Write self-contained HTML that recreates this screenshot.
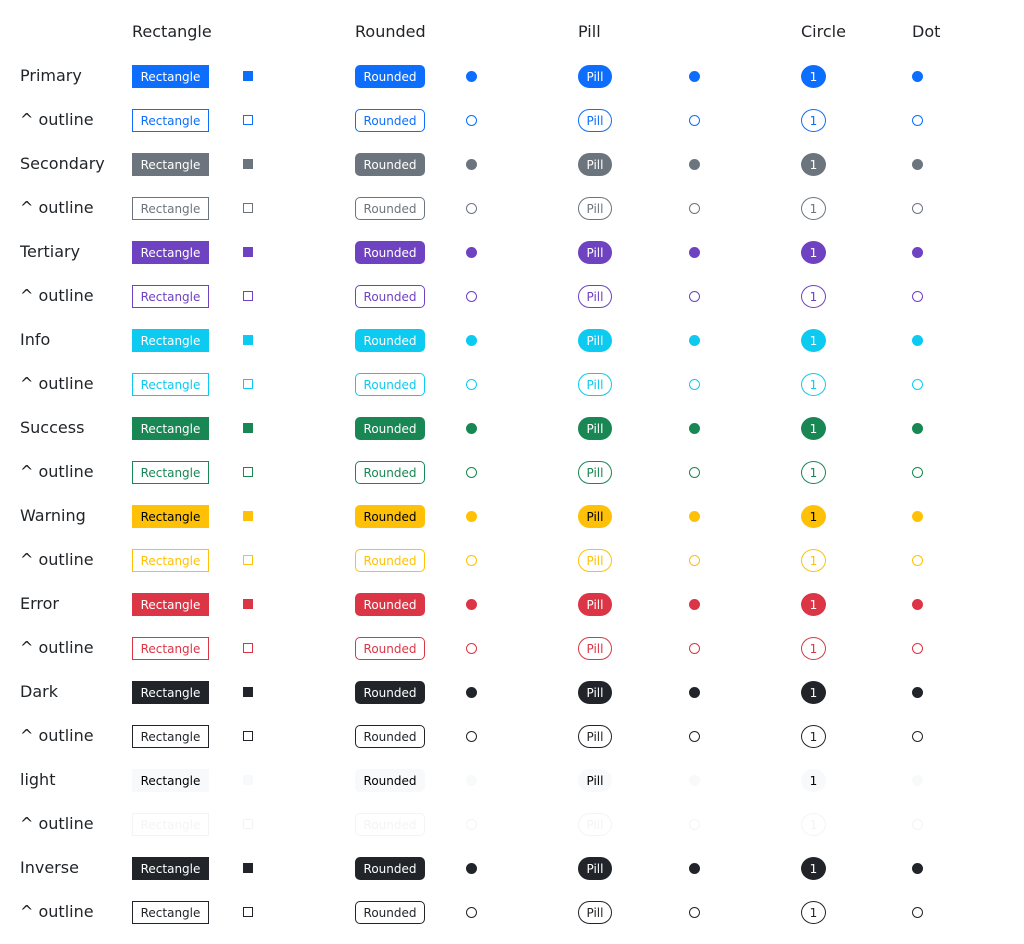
<!DOCTYPE html>
<html><head><meta charset="utf-8">
<style>
*{box-sizing:border-box;margin:0;padding:0}
body{width:1024px;height:944px;background:#fff;font-family:"DejaVu Sans","Liberation Sans",sans-serif;color:#212529;position:relative;overflow:hidden}
.h{position:absolute;top:22px;font-size:16px;line-height:20px}
.r{position:absolute;left:0;width:1024px;height:23px}
.r>*{position:absolute}
.l{left:20px;top:-1px;font-size:16px;line-height:23px}
.b{height:23px;line-height:21px;padding-top:1px;font-size:12px;text-align:center;border:1px solid var(--c);background:var(--c);color:#fff;white-space:nowrap}
.rect{left:132px;width:77px}
.sq{left:243px;top:6px;width:10px;height:10px;border:1px solid var(--c);background:var(--c)}
.rnd{left:355px;width:70px;border-radius:5px}
.d1{left:466px;top:6px;width:11px;height:11px;border-radius:50%;border:1px solid var(--c);background:var(--c)}
.pill{left:578px;width:34px;border-radius:12px}
.d2{left:689px;top:6px;width:11px;height:11px;border-radius:50%;border:1px solid var(--c);background:var(--c)}
.cir{left:801px;width:25px;border-radius:50%}
.d3{left:912px;top:6px;width:11px;height:11px;border-radius:50%;border:1px solid var(--c);background:var(--c)}
.o .b,.o .sq,.o .d1,.o .d2,.o .d3{background:#fff}
.o .b{color:var(--c)}
.k .b{color:#000}
.o.k .b{color:var(--c)}
.lt .b{color:#000}
</style></head><body>
<div class="h" style="left:132px">Rectangle</div>
<div class="h" style="left:355px">Rounded</div>
<div class="h" style="left:578px">Pill</div>
<div class="h" style="left:801px">Circle</div>
<div class="h" style="left:912px">Dot</div>

<div class="r" style="top:65px;--c:#0d6efd"><span class="l">Primary</span><span class="b rect">Rectangle</span><span class="sq"></span><span class="b rnd">Rounded</span><span class="d1"></span><span class="b pill">Pill</span><span class="d2"></span><span class="b cir">1</span><span class="d3"></span></div>
<div class="r o" style="top:109px;--c:#0d6efd"><span class="l">^ outline</span><span class="b rect">Rectangle</span><span class="sq"></span><span class="b rnd">Rounded</span><span class="d1"></span><span class="b pill">Pill</span><span class="d2"></span><span class="b cir">1</span><span class="d3"></span></div>
<div class="r" style="top:153px;--c:#6c757d"><span class="l">Secondary</span><span class="b rect">Rectangle</span><span class="sq"></span><span class="b rnd">Rounded</span><span class="d1"></span><span class="b pill">Pill</span><span class="d2"></span><span class="b cir">1</span><span class="d3"></span></div>
<div class="r o" style="top:197px;--c:#6c757d"><span class="l">^ outline</span><span class="b rect">Rectangle</span><span class="sq"></span><span class="b rnd">Rounded</span><span class="d1"></span><span class="b pill">Pill</span><span class="d2"></span><span class="b cir">1</span><span class="d3"></span></div>
<div class="r" style="top:241px;--c:#6f42c1"><span class="l">Tertiary</span><span class="b rect">Rectangle</span><span class="sq"></span><span class="b rnd">Rounded</span><span class="d1"></span><span class="b pill">Pill</span><span class="d2"></span><span class="b cir">1</span><span class="d3"></span></div>
<div class="r o" style="top:285px;--c:#6f42c1"><span class="l">^ outline</span><span class="b rect">Rectangle</span><span class="sq"></span><span class="b rnd">Rounded</span><span class="d1"></span><span class="b pill">Pill</span><span class="d2"></span><span class="b cir">1</span><span class="d3"></span></div>
<div class="r" style="top:329px;--c:#0dcaf0"><span class="l">Info</span><span class="b rect">Rectangle</span><span class="sq"></span><span class="b rnd">Rounded</span><span class="d1"></span><span class="b pill">Pill</span><span class="d2"></span><span class="b cir">1</span><span class="d3"></span></div>
<div class="r o" style="top:373px;--c:#0dcaf0"><span class="l">^ outline</span><span class="b rect">Rectangle</span><span class="sq"></span><span class="b rnd">Rounded</span><span class="d1"></span><span class="b pill">Pill</span><span class="d2"></span><span class="b cir">1</span><span class="d3"></span></div>
<div class="r" style="top:417px;--c:#198754"><span class="l">Success</span><span class="b rect">Rectangle</span><span class="sq"></span><span class="b rnd">Rounded</span><span class="d1"></span><span class="b pill">Pill</span><span class="d2"></span><span class="b cir">1</span><span class="d3"></span></div>
<div class="r o" style="top:461px;--c:#198754"><span class="l">^ outline</span><span class="b rect">Rectangle</span><span class="sq"></span><span class="b rnd">Rounded</span><span class="d1"></span><span class="b pill">Pill</span><span class="d2"></span><span class="b cir">1</span><span class="d3"></span></div>
<div class="r k" style="top:505px;--c:#ffc107"><span class="l">Warning</span><span class="b rect">Rectangle</span><span class="sq"></span><span class="b rnd">Rounded</span><span class="d1"></span><span class="b pill">Pill</span><span class="d2"></span><span class="b cir">1</span><span class="d3"></span></div>
<div class="r o k" style="top:549px;--c:#ffc107"><span class="l">^ outline</span><span class="b rect">Rectangle</span><span class="sq"></span><span class="b rnd">Rounded</span><span class="d1"></span><span class="b pill">Pill</span><span class="d2"></span><span class="b cir">1</span><span class="d3"></span></div>
<div class="r" style="top:593px;--c:#dc3545"><span class="l">Error</span><span class="b rect">Rectangle</span><span class="sq"></span><span class="b rnd">Rounded</span><span class="d1"></span><span class="b pill">Pill</span><span class="d2"></span><span class="b cir">1</span><span class="d3"></span></div>
<div class="r o" style="top:637px;--c:#dc3545"><span class="l">^ outline</span><span class="b rect">Rectangle</span><span class="sq"></span><span class="b rnd">Rounded</span><span class="d1"></span><span class="b pill">Pill</span><span class="d2"></span><span class="b cir">1</span><span class="d3"></span></div>
<div class="r" style="top:681px;--c:#212529"><span class="l">Dark</span><span class="b rect">Rectangle</span><span class="sq"></span><span class="b rnd">Rounded</span><span class="d1"></span><span class="b pill">Pill</span><span class="d2"></span><span class="b cir">1</span><span class="d3"></span></div>
<div class="r o" style="top:725px;--c:#212529"><span class="l">^ outline</span><span class="b rect">Rectangle</span><span class="sq"></span><span class="b rnd">Rounded</span><span class="d1"></span><span class="b pill">Pill</span><span class="d2"></span><span class="b cir">1</span><span class="d3"></span></div>
<div class="r lt" style="top:769px;--c:#f8f9fa"><span class="l">light</span><span class="b rect">Rectangle</span><span class="sq"></span><span class="b rnd">Rounded</span><span class="d1"></span><span class="b pill">Pill</span><span class="d2"></span><span class="b cir">1</span><span class="d3"></span></div>
<div class="r o" style="top:813px;--c:#f3f4f5"><span class="l">^ outline</span><span class="b rect">Rectangle</span><span class="sq"></span><span class="b rnd">Rounded</span><span class="d1"></span><span class="b pill">Pill</span><span class="d2"></span><span class="b cir">1</span><span class="d3"></span></div>
<div class="r" style="top:857px;--c:#212529"><span class="l">Inverse</span><span class="b rect">Rectangle</span><span class="sq"></span><span class="b rnd">Rounded</span><span class="d1"></span><span class="b pill">Pill</span><span class="d2"></span><span class="b cir">1</span><span class="d3"></span></div>
<div class="r o" style="top:901px;--c:#212529"><span class="l">^ outline</span><span class="b rect">Rectangle</span><span class="sq"></span><span class="b rnd">Rounded</span><span class="d1"></span><span class="b pill">Pill</span><span class="d2"></span><span class="b cir">1</span><span class="d3"></span></div>
</body></html>
